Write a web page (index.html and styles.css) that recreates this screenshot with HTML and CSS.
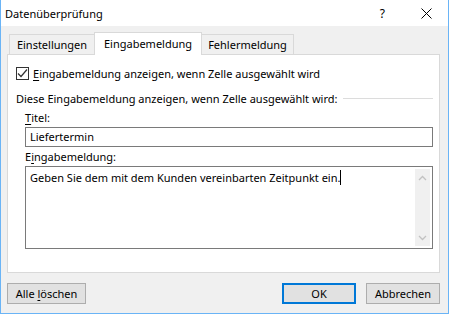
FILE: index.html
```html
<!DOCTYPE html>
<html>
<head>
    <title>Datenüberprüfung</title>
    <link rel="stylesheet" href="styles.css">
</head>
<body>
    <div class="window">
        <div class="titlebar">
            <span class="title">Datenüberprüfung</span>
            <span class="help">?</span>
            <svg class="close" width="11" height="11" viewBox="0 0 11 11">
                <path d="M0.5 0.5 L10.5 10.5 M10.5 0.5 L0.5 10.5" stroke="#000" stroke-width="1" fill="none"/>
            </svg>
        </div>
        <div class="content">
            <div class="tabs">
                <div class="tab tab-1">Einstellungen</div>
                <div class="tab tab-2 active">Eingabemeldung</div>
                <div class="tab tab-3">Fehlermeldung</div>
            </div>
            <div class="panel">
                <div class="check-row">
                    <span class="checkbox">
                        <svg width="11" height="11" viewBox="0 0 11 11">
                            <path d="M1 5.5 L4 8.5 L10 1.5" stroke="#333" stroke-width="1.2" fill="none"/>
                        </svg>
                    </span>
                    <span><u>E</u>ingabemeldung anzeigen, wenn Zelle ausgewählt wird</span>
                </div>
                <div class="group-label">
                    <span>Diese Eingabemeldung anzeigen, wenn Zelle ausgewählt wird:</span>
                    <span class="rule"></span>
                </div>
                <div class="field-label"><u>T</u>itel:</div>
                <div class="field">Liefertermin</div>
                <div class="field-label memo-label">E<u>i</u>ngabemeldung:</div>
                <div class="field memo">
                    <div class="memo-text">Geben Sie dem mit dem Kunden vereinbarten Zeitpunkt ein.<span class="caret"></span></div>
                    <div class="scrollbar">
                        <svg width="9" height="6" viewBox="0 0 9 6"><path d="M1 5 L4.5 1.5 L8 5" stroke="#c2c2c2" stroke-width="1.3" fill="none"/></svg>
                        <svg width="9" height="6" viewBox="0 0 9 6"><path d="M1 1 L4.5 4.5 L8 1" stroke="#c2c2c2" stroke-width="1.3" fill="none"/></svg>
                    </div>
                </div>
            </div>
            <div class="footer">
                <button class="btn btn-clear">Alle <u>l</u>öschen</button>
                <span class="spacer"></span>
                <button class="btn default">OK</button>
                <button class="btn">Abbrechen</button>
            </div>
        </div>
    </div>
</body>
</html>
```

FILE: styles.css
```css
html, body {
    margin: 0;
    padding: 0;
}
body {
    font-family: 'Noto Sans', 'Open Sans', sans-serif;
    font-size: 11px;
    color: #000;
    background-color: #f0f0f0;
}
u {
    text-decoration: underline;
    text-underline-offset: 2px;
}
.window {
    width: 449px;
    height: 314px;
    box-sizing: border-box;
    border: 1px solid #6ab4f6;
    border-top: none;
    background-color: #f0f0f0;
    display: flex;
    flex-direction: column;
}
.titlebar {
    height: 26px;
    background-color: #fff;
    display: flex;
    align-items: center;
    padding-left: 4px;
    padding-right: 16px;
}
.title {
    flex: 1;
    font-size: 11px;
}
.help {
    font-size: 12px;
    margin-right: 36px;
}
.close {
    display: block;
}
.content {
    flex: 1;
    padding: 6px 8px 0 6px;
    display: flex;
    flex-direction: column;
}
.tabs {
    display: flex;
    padding-left: 2px;
    height: 22px;
    align-items: flex-end;
    position: relative;
    z-index: 1;
}
.tab {
    height: 20px;
    box-sizing: border-box;
    border: 1px solid #d9d9d9;
    border-bottom: none;
    line-height: 19px;
    text-align: center;
    background-color: #f0f0f0;
}
.tab-1 {
    width: 86px;
}
.tab-2 {
    width: 108px;
}
.tab-3 {
    width: 92px;
}
.tab + .tab {
    border-left: none;
}
.tab.active {
    height: 23px;
    background-color: #fff;
    line-height: 21px;
    border-left: 1px solid #d9d9d9;
    margin-bottom: -1px;
    margin-left: -1px;
}
.panel {
    height: 219px;
    box-sizing: border-box;
    background-color: #fff;
    border: 1px solid #d9d9d9;
    padding: 10px 6px 0 8px;
}
.check-row {
    display: flex;
    align-items: center;
    gap: 4px;
    height: 16px;
}
.checkbox {
    width: 13px;
    height: 13px;
    box-sizing: border-box;
    border: 1px solid #333;
    display: flex;
    align-items: center;
    justify-content: center;
}
.checkbox svg {
    display: block;
}
.group-label {
    display: flex;
    align-items: center;
    margin-top: 8px;
    height: 18px;
}
.rule {
    flex: 1;
    height: 1px;
    background-color: #dcdcdc;
    margin-left: 6px;
}
.field-label {
    margin-left: 9px;
    height: 18px;
    line-height: 18px;
    margin-top: 2px;
}
.memo-label {
    margin-top: 1px;
}
.field {
    margin-left: 9px;
    height: 20px;
    box-sizing: border-box;
    border: 1px solid #7a7a7a;
    padding: 0 4px;
    line-height: 18px;
    background-color: #fff;
}
.field.memo {
    height: 83px;
    display: flex;
    padding: 2px 2px 2px 4px;
    line-height: 16px;
}
.memo-text {
    flex: 1;
    padding-top: 1px;
}
.caret {
    display: inline-block;
    width: 1px;
    height: 15px;
    background-color: #000;
    vertical-align: -3px;
}
.scrollbar {
    width: 15px;
    background-color: #f0f0f0;
    display: flex;
    flex-direction: column;
    justify-content: space-between;
    align-items: center;
    padding: 6px 0 5px;
}
.scrollbar svg {
    display: block;
}
.footer {
    display: flex;
    align-items: center;
    margin-top: 10px;
    gap: 10px;
}
.spacer {
    flex: 1;
}
.btn {
    font-family: inherit;
    font-size: 11px;
    color: #000;
    height: 21px;
    width: 74px;
    box-sizing: border-box;
    border: 1px solid #adadad;
    background-color: #e1e1e1;
    padding: 0;
    line-height: 17px;
}
.btn-clear {
    width: 79px;
}
.btn.default {
    border: 2px solid #0078d7;
}
```
